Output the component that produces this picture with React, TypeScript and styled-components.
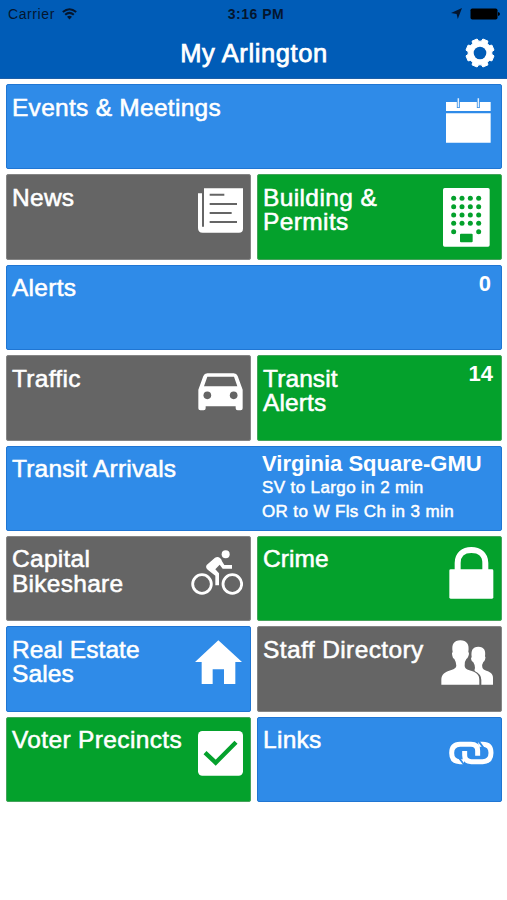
import React from "react";
import styled, { createGlobalStyle } from "styled-components";

const GlobalStyle = createGlobalStyle`
  body { margin: 0; background: #fff; font-family: "Liberation Sans", Arial, sans-serif; }
`;

type Tone = "blue" | "gray" | "green";
const fills: Record<Tone, string> = { blue: "#2f8be8", gray: "#656565", green: "#04a12c" };
const edges: Record<Tone, string> = { blue: "#2076d3", gray: "#858585", green: "#45a35b" };

const Screen = styled.main`
  width: 507px;
  height: 900px;
  overflow: hidden;
  background: #fff;
`;
const Header = styled.header`
  height: 79px;
  box-sizing: border-box;
  background: #005cb7;
  border-bottom: 1px solid #1d5fa8;
`;
const StatusBar = styled.div`
  height: 27px;
  display: grid;
  grid-template-columns: 1fr auto 1fr;
  align-items: center;
  padding: 0 7px 0 8px;
  font-size: 14px;
  color: #04162f;
`;
const Carrier = styled.div`
  display: flex;
  align-items: center;
  gap: 7px;
  letter-spacing: 0.6px;
`;
const Clock = styled.span`
  margin-left: 4px;
  font-weight: 700;
  letter-spacing: 0.5px;
  font-size: 14px;
`;
const Indicators = styled.div`
  display: flex;
  align-items: center;
  justify-content: flex-end;
  gap: 8px;
`;
const NavBar = styled.div`
  height: 51px;
  display: grid;
  grid-template-columns: 1fr auto 1fr;
  align-items: center;
  padding: 0 12px;
`;
const Title = styled.h1`
  grid-column: 2;
  margin: 2px 0 0 1px;
  color: #fff;
  font-size: 25.5px;
  font-weight: 400;
  letter-spacing: 0.6px;
  -webkit-text-stroke: 0.75px #fff;
`;
const GearButton = styled.button`
  justify-self: end;
  display: flex;
  padding: 0;
  border: 0;
  background: none;
`;
const Tiles = styled.section`
  display: grid;
  grid-template-columns: 245px 245px;
  grid-auto-rows: 85.4px;
  gap: 5px 6px;
  padding: 5px 5px 0 6px;
`;
const TileBox = styled.article<{ $tone: Tone; $wide?: boolean }>`
  grid-column: ${(p) => (p.$wide ? "span 2" : "auto")};
  box-sizing: border-box;
  display: flex;
  justify-content: space-between;
  padding-left: 5px;
  overflow: hidden;
  border: 1px solid ${(p) => edges[p.$tone]};
  border-radius: 2px;
  background: ${(p) => fills[p.$tone]};
  color: #fff;
`;
const Label = styled.h2<{ $spacing?: number }>`
  margin: 10.5px 0 0;
  font-size: 24.5px;
  line-height: 24.5px;
  font-weight: 400;
  letter-spacing: ${(p) => p.$spacing ?? 0.28}px;
  white-space: pre-line;
  -webkit-text-stroke: 0.55px #fff;
`;
const IconSlot = styled.span<{ $top: number; $right: number }>`
  flex: none;
  display: flex;
  align-self: flex-start;
  margin: ${(p) => p.$top}px ${(p) => p.$right}px 0 0;
`;
const Count = styled.strong<{ $right: number }>`
  margin: 5px ${(p) => p.$right}px 0 0;
  font-size: 22px;
  line-height: 26px;
`;
const Arrivals = styled.div`
  width: 239px;
  padding-top: 4.5px;
`;
const Station = styled.div`
  font-size: 22px;
  line-height: 25px;
  font-weight: 700;
`;
const Arrival = styled.div`
  font-size: 17px;
  line-height: 24px;
  letter-spacing: 0.38px;
  -webkit-text-stroke: 0.5px #fff;
`;

/* Each drawing uses three view units per pixel. */
const Drawing = ({ box, children }: { box: [number, number, number, number]; children: React.ReactNode }) => (
  <svg width={box[2] / 3} height={box[3] / 3} viewBox={box.join(" ")} fill="#fff">
    {children}
  </svg>
);

const CalendarIcon = () => (
  <Drawing box={[79, 60, 135, 135]}>
    <path d="M79 72H213V99H79zM79 106H213V194H79z" />
    <path d="M116 66V90M176 66V90" stroke={fills.blue} strokeWidth="9" />
    <path d="M116 61V88M176 61V88" stroke="#e4f0fd" strokeWidth="4.5" />
  </Drawing>
);
const NewsIcon = () => (
  <Drawing box={[54, 56, 136, 135]}>
    <path d="M72 57H189V178Q189 190 177 190H68Q54 190 54 176V72H72z" />
    <path d="M89 76H133M89 104H171M89 131H155M89 158H171" stroke={fills.gray} strokeWidth="6" />
    <path d="M69 70V170" stroke={fills.gray} strokeWidth="6" strokeLinecap="round" />
  </Drawing>
);
const BuildingIcon = () => (
  <Drawing box={[68, 53, 141, 177]}>
    <rect x="68" y="53" width="140" height="176" rx="5" />
    <g fill={fills.green}>
      {[84, 109, 134, 159, 184].map((y) =>
        [100, 125, 150, 175]
          .filter((x) => y < 184 || x === 100 || x === 175)
          .map((x) => <circle key={`${x}-${y}`} cx={x} cy={y} r="7.5" />)
      )}
      <rect x="119" y="190" width="38" height="26" rx="3" />
    </g>
  </Drawing>
);
const CarIcon = () => (
  <Drawing box={[54, 69, 135, 114]}>
    <path
      fillRule="evenodd"
      d="M82 70H161Q170 70 173 78L188 119V175Q188 181 182 181H173Q167 181 167 175V169H77V175Q77 181 71 181H61Q55 181 55 175V119L70 78Q73 70 82 70zM82 80L72 109H172L162 80z"
    />
    <circle cx="82" cy="136" r="11.5" fill={fills.gray} />
    <circle cx="161" cy="136" r="11.5" fill={fills.gray} />
  </Drawing>
);
const BikeIcon = () => (
  <Drawing box={[32, 60, 157, 136]}>
    <g fill="none" stroke="#fff" strokeWidth="8.5">
      <circle cx="65" cy="162" r="28" />
      <circle cx="156" cy="162" r="28" />
    </g>
    <circle cx="136" cy="73" r="12" />
    <path d="M79 105L104 83Q112 78 119 84Q124 88 125 94L132 105H155V116H127L118 104L105 118L116 130V166H105V137L84 121Q74 113 79 105z" />
  </Drawing>
);
const LockIcon = () => (
  <Drawing box={[86, 50, 134, 156]}>
    <path d="M112 122V98C112 72 130 59 153 59S195 72 195 98V122" fill="none" stroke="#fff" strokeWidth="18" />
    <rect x="87" y="117" width="132" height="88" rx="4" />
  </Drawing>
);
const HouseIcon = () => (
  <Drawing box={[46, 63, 142, 133]}>
    <path d="M116 64L187 129H167V195H133V151H99V195H66V129H46z" />
  </Drawing>
);
const CheckIcon = () => (
  <Drawing box={[54, 333, 136, 135]}>
    <rect x="54" y="333" width="135" height="134" rx="13" />
    <path d="M75 398L107 428L168 367" fill="none" stroke={fills.green} strokeWidth="13" />
  </Drawing>
);
const PeopleIcon = () => (
  <Drawing box={[63, 61, 158, 135]}>
    <path d="M155 111C153 94 157 81 175 81S198 94 195 110Q198 112 195 120Q193 125 190 127Q185 135 187 143Q188 150 199 153C213 157 219 164 219 174V195H184V181Q184 163 164 154Q163 150 165 145Q166 138 160 128Q154 124 153 117z" />
    <path d="M98 97C94 74 102 62 121 62S149 74 145 97Q149 100 145 110Q143 116 139 118Q132 128 134 138Q134 147 148 152C169 158 178 164 178 181V195H64V181C64 164 75 157 94 151Q108 147 109 138Q109 128 103 118Q98 116 97 108Q94 99 98 97z" />
  </Drawing>
);
const LinkIcon = () => (
  <Drawing box={[86, 364, 134, 71]}>
    <g fill="none" stroke="#fff" strokeWidth="15">
      <path d="M172 408V393Q172 374 152 374H119Q94 375 94 400Q94 426 119 426H131" />
      <path d="M133 394V407Q133 426 153 426H187Q212 425 212 400Q212 374 187 374H174" />
    </g>
    <path d="M119 414L135 436H129L112 414zM171 364H178L194 386H187z" fill={fills.blue} />
  </Drawing>
);
const WifiIcon = () => (
  <svg width="15" height="12" viewBox="0 0 15 12" fill="none" stroke="#04162f" strokeWidth="2">
    <path d="M.8 4Q7.5-1.6 14.2 4M3.2 6.8Q7.5 3 11.8 6.8" />
    <path d="M5 8.8Q7.5 6.8 10 8.8L7.5 11.5z" fill="#04162f" stroke="none" />
  </svg>
);
const LocationIcon = () => (
  <svg width="11" height="11" viewBox="0 0 11 11" fill="#04162f">
    <path d="M11 0L6.8 11L5.6 5.9L0 5z" />
  </svg>
);
const BatteryIcon = () => (
  <svg width="30" height="12" viewBox="0 0 30 12" fill="#000">
    <rect x=".5" y=".5" width="27" height="11" rx="1.8" />
    <path d="M28 4Q30 4.5 30 6T28 8z" />
  </svg>
);

const gearOutline = (() => {
  const points: string[] = [];
  for (let i = 0; i < 8; i++) {
    const mid = (i * Math.PI) / 4 + Math.PI / 8;
    for (const [turn, radius] of [[-0.28, 11.9], [-0.19, 14.3], [0.19, 14.3], [0.28, 11.9]]) {
      points.push(`${(15 + radius * Math.cos(mid + turn)).toFixed(2)} ${(15 + radius * Math.sin(mid + turn)).toFixed(2)}`);
    }
  }
  return `M${points.join("L")}z`;
})();
const GearIcon = () => (
  <svg width="30" height="30" viewBox="0 0 30 30">
    <path d={gearOutline} fill="#fff" stroke="#fff" strokeWidth="1" strokeLinejoin="round" />
    <circle cx="15" cy="15" r="6.3" fill="#005cb7" />
  </svg>
);

interface TileProps {
  tone: Tone;
  label: string;
  wide?: boolean;
  spacing?: number;
  icon?: React.ReactNode;
  top?: number;
  right?: number;
  children?: React.ReactNode;
}
const Tile = ({ tone, label, wide, spacing, icon, top = 13, right = 8, children }: TileProps) => (
  <TileBox $tone={tone} $wide={wide}>
    <Label $spacing={spacing}>{label}</Label>
    {icon && <IconSlot $top={top} $right={right}>{icon}</IconSlot>}
    {children}
  </TileBox>
);

export default function App() {
  return (
    <Screen>
      <GlobalStyle />
      <Header>
        <StatusBar>
          <Carrier>Carrier <WifiIcon /></Carrier>
          <Clock>3:16 PM</Clock>
          <Indicators><LocationIcon /><BatteryIcon /></Indicators>
        </StatusBar>
        <NavBar>
          <Title>My Arlington</Title>
          <GearButton aria-label="Settings"><GearIcon /></GearButton>
        </NavBar>
      </Header>
      <Tiles>
        <Tile tone="blue" label="Events & Meetings" wide icon={<CalendarIcon />} right={10} />
        <Tile tone="gray" label="News" icon={<NewsIcon />} right={7} />
        <Tile tone="green" label={"Building &\nPermits"} spacing={0.38} icon={<BuildingIcon />} top={12.3} right={11.5} />
        <Tile tone="blue" label="Alerts" wide><Count $right={10}>0</Count></Tile>
        <Tile tone="gray" label="Traffic" icon={<CarIcon />} top={17} right={7} />
        <Tile tone="green" label={"Transit\nAlerts"} spacing={0.1}><Count $right={8}>14</Count></Tile>
        <Tile tone="blue" label="Transit Arrivals" spacing={0.2} wide>
          <Arrivals>
            <Station>Virginia Square-GMU</Station>
            <Arrival>SV to Largo in 2 min</Arrival>
            <Arrival>OR to W Fls Ch in 3 min</Arrival>
          </Arrivals>
        </Tile>
        <Tile tone="gray" label={"Capital\nBikeshare"} icon={<BikeIcon />} top={13} right={7} />
        <Tile tone="green" label="Crime" spacing={0.1} icon={<LockIcon />} top={9.7} right={7.5} />
        <Tile tone="blue" label={"Real Estate\nSales"} spacing={0.1} icon={<HouseIcon />} right={7.5} />
        <Tile tone="gray" label="Staff Directory" spacing={0.4} icon={<PeopleIcon />} right={7} />
        <Tile tone="green" label="Voter Precincts" spacing={0.35} icon={<CheckIcon />} right={7} />
        <Tile tone="blue" label="Links" icon={<LinkIcon />} top={23.5} right={7.5} />
      </Tiles>
    </Screen>
  );
}
